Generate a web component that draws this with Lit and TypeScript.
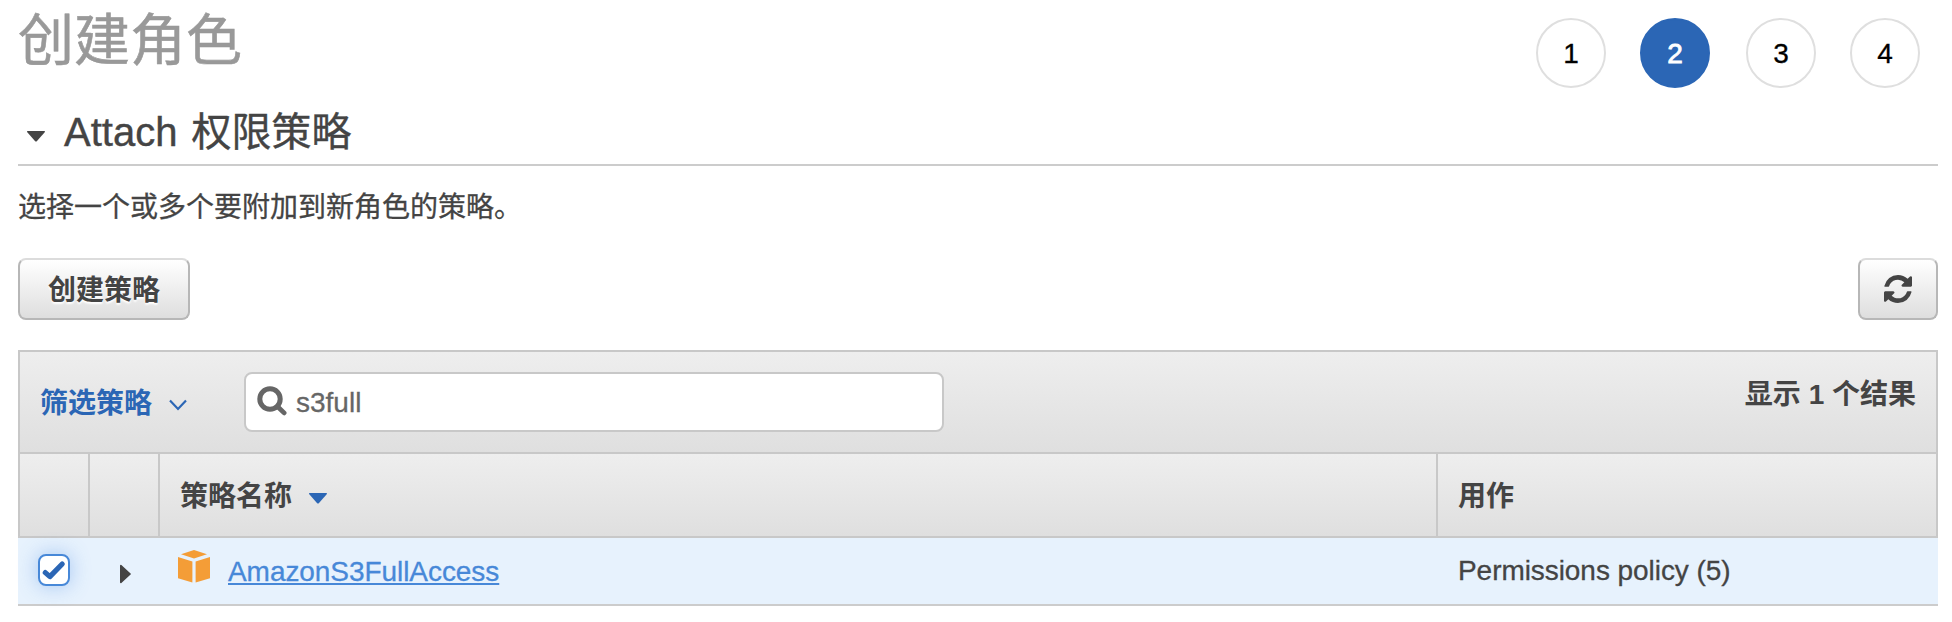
import { LitElement, html, css, svg } from "lit";
import { customElement, property, state } from "lit/decorators.js";
import { classMap } from "lit/directives/class-map.js";

interface Policy {
  name: string;
  usedAs: string;
  selected: boolean;
}

const refreshPath =
  "M1511 1056q0 5-1 7-64 268-268 434.5t-478 166.5q-146 0-282.5-55t-243.5-157l-129 129q-19 19-45 19t-45-19-19-45v-448q0-26 19-45t45-19h448q26 0 45 19t19 45-19 45l-137 137q71 66 161 102t187 36q134 0 250-65t186-179q11-17 53-117 8-23 30-23h192q13 0 22.5 9.5t9.5 22.5zm25-800v448q0 26-19 45t-45 19h-448q-26 0-45-19t-19-45 19-45l138-138q-148-137-349-137-134 0-250 65t-186 179q-11 17-53 117-8 23-30 23h-199q-13 0-22.5-9.5t-9.5-22.5v-7q65-268 270-434.5t480-166.5q146 0 284 55.5t245 156.5l130-129q19-19 45-19t45 19 19 45z";

@customElement("wizard-steps")
export class WizardSteps extends LitElement {
  @property({ type: Number }) count = 4;
  @property({ type: Number }) current = 1;

  static styles = css`
    :host {
      display: flex;
      gap: 34px;
    }
    .step {
      box-sizing: border-box;
      width: 70px;
      height: 70px;
      border: 2px solid #dfdfdf;
      border-radius: 50%;
      background: #fff;
      color: #000;
      font-size: 28px;
      line-height: 68px;
      text-align: center;
      -webkit-text-stroke: 0.3px currentColor;
    }
    .current {
      margin-right: 2px;
      border-color: #2b66b5;
      background: #2b66b5;
      color: #fff;
      -webkit-text-stroke: 0.8px #fff;
    }
  `;

  render() {
    return Array.from({ length: this.count }, (_, i) => i + 1).map(
      (n) => html`<div class=${classMap({ step: true, current: n === this.current })}>${n}</div>`
    );
  }
}

@customElement("app-root")
export class AppRoot extends LitElement {
  @state() private query = "s3full";
  @state() private policies: Policy[] = [
    { name: "AmazonS3FullAccess", usedAs: "Permissions policy (5)", selected: true },
  ];

  static styles = css`
    :host {
      display: block;
      box-sizing: border-box;
      height: 622px;
      padding: 0 14px 0 18px;
      overflow: hidden;
      background: #fff;
      color: #444;
      font-family: "Liberation Sans", "Noto Sans CJK SC", sans-serif;
      font-size: 28px;
    }
    svg {
      display: block;
      flex: none;
    }
    .top {
      display: flex;
      justify-content: space-between;
      height: 98px;
      padding-right: 18px;
    }
    .title {
      margin: 0;
      color: #999;
      font-size: 56px;
      font-weight: 400;
      line-height: 81px;
      -webkit-text-stroke: 0.6px currentColor;
    }
    .steps {
      margin-top: 18px;
    }
    .section {
      display: flex;
      box-sizing: border-box;
      height: 68px;
      margin: 0;
      padding-left: 9px;
      border-bottom: 2px solid #ccc;
      font-size: 40px;
      font-weight: 400;
      line-height: 68px;
      word-spacing: 3px;
      -webkit-text-stroke: 0.4px currentColor;
    }
    .section svg {
      margin: 33px 19px 0 0;
    }
    .hint {
      margin: 0;
      height: 92px;
      line-height: 83px;
      -webkit-text-stroke: 0.3px currentColor;
    }
    .actions {
      display: flex;
      justify-content: space-between;
      height: 62px;
      margin-bottom: 30px;
    }
    .button {
      display: flex;
      align-items: center;
      justify-content: center;
      box-sizing: border-box;
      width: 172px;
      height: 62px;
      padding: 0;
      border: 2px solid #b7b7b7;
      border-top-color: #dcdcdc;
      border-radius: 8px;
      background: linear-gradient(#fff, #dedede);
      color: #444;
      font: 700 28px/58px "Liberation Sans", "Noto Sans CJK SC", sans-serif;
      text-shadow: 0 2px 2px #fff;
    }
    .button span {
      padding-top: 3px;
    }
    .icon-button {
      width: 80px;
    }
    .filter {
      display: flex;
      box-sizing: border-box;
      height: 102px;
      padding: 20px 20px 0 20px;
      border: 2px solid #c8c8c8;
      border-bottom: 0;
      background: linear-gradient(#eee, #dfdfdf);
      font-weight: 700;
    }
    .filter-menu {
      display: flex;
      width: 204px;
      color: #2b66b5;
      line-height: 63px;
    }
    .filter-menu svg {
      margin: 27px 0 0 16px;
    }
    .search {
      display: flex;
      box-sizing: border-box;
      width: 700px;
      height: 60px;
      padding-left: 11px;
      border: 2px solid #c8c8c8;
      border-radius: 8px;
      background: #fff;
      color: #666;
      font-weight: 400;
      line-height: 57px;
      -webkit-text-stroke: 0.3px currentColor;
    }
    .search svg {
      margin: 12px 9px 0 0;
    }
    .result {
      margin-left: auto;
      line-height: 46px;
    }
    .grid {
      display: grid;
      grid-template-columns: 72px 70px 1278px 1fr;
    }
    .head {
      box-sizing: border-box;
      height: 86px;
      border: 2px solid #c8c8c8;
      grid-template-columns: 70px 70px 1278px 1fr;
      background: linear-gradient(#eee, #dfdfdf);
      font-weight: 700;
      line-height: 85px;
    }
    .th {
      display: flex;
      box-sizing: border-box;
      height: 82px;
      padding-left: 20px;
      border-right: 2px solid #c8c8c8;
    }
    .th:last-child {
      border-right: 0;
    }
    .th svg {
      margin: 39px 0 0 17px;
    }
    .row {
      box-sizing: border-box;
      height: 68px;
      border-bottom: 2px solid #ccc;
      line-height: 65px;
    }
    .selected {
      background: #e7f2fd;
    }
    .check {
      box-sizing: border-box;
      width: 32px;
      height: 32px;
      margin: 16px 0 0 20px;
      border: 2px solid #4788d8;
      border-radius: 8px;
      background: #fff;
      box-shadow: 0 0 20px rgba(71, 136, 226, 0.42);
    }
    .expand {
      margin: 26px 0 0 30px;
    }
    .name {
      display: flex;
      padding-left: 18px;
      line-height: 68px;
    }
    .name svg {
      margin: 12px 18px 0 0;
    }
    .link {
      height: 66px;
      color: #4788d8;
      letter-spacing: -0.06px;
      text-decoration: underline;
      text-decoration-thickness: 2px;
      text-underline-offset: 2px;
      text-decoration-skip-ink: none;
      -webkit-text-stroke: 0.3px currentColor;
    }
    .used {
      padding-left: 20px;
      letter-spacing: -0.06px;
      -webkit-text-stroke: 0.3px currentColor;
    }
  `;

  private down(color: string) {
    return html`<svg width="18" height="11" viewBox="0 0 18 11">
      ${svg`<path fill=${color} d="M0.5 0h17q.8.6.2 1.3L9.8 10.2q-.8.8-1.6 0L.3 1.3Q-.3.6.5 0z"/>`}
    </svg>`;
  }

  private row(p: Policy) {
    return html`<div class=${classMap({ grid: true, row: true, selected: p.selected })}>
      <div>
        <div class="check">
          <svg width="28" height="28" viewBox="2 2 28 28" fill="none" stroke="#2b66b5"
            stroke-width="5.2" stroke-linecap="round" stroke-linejoin="round">
            <path d="M7.3 18.6l4.6 4L24.2 10" />
          </svg>
        </div>
      </div>
      <div>
        <svg class="expand" width="11" height="20" viewBox="0 0 11 20">
          <path fill="#444" d="M0 1.4Q.5.4 1.4 1L10.6 9.4q.7.6 0 1.2L1.4 19Q.5 19.6 0 18.6z" />
        </svg>
      </div>
      <div class="name">
        <svg width="32" height="33" viewBox="0 0 32 33" fill="#f49d37">
          <path d="M3 4.2L16 0l13 4.2-13 4.2z" />
          <path d="M0 7l14.4 4.6v20.9L0 28.2z" />
          <path d="M32 7l-14.4 4.6v20.9L32 28.2z" />
        </svg>
        <span class="link">${p.name}</span>
      </div>
      <div class="used">${p.usedAs}</div>
    </div>`;
  }

  render() {
    return html`
      <header class="top">
        <h1 class="title">创建角色</h1>
        <wizard-steps class="steps" .count=${4} .current=${2}></wizard-steps>
      </header>
      <h2 class="section">${this.down("#444")}<span>Attach 权限策略</span></h2>
      <p class="hint">选择一个或多个要附加到新角色的策略。</p>
      <div class="actions">
        <button class="button"><span>创建策略</span></button>
        <button class="button icon-button" aria-label="刷新">
          <svg width="28" height="28" viewBox="0 128 1536 1536" fill="#444">
            <path d=${refreshPath} />
          </svg>
        </button>
      </div>
      <div class="filter">
        <div class="filter-menu">
          <span>筛选策略</span>
          <svg width="20" height="13" viewBox="0 0 20 13" fill="none" stroke="#2b66b5" stroke-width="2.2">
            <path d="M2 1.6l8 8.4 8-8.4" />
          </svg>
        </div>
        <div class="search">
          <svg width="30" height="30" viewBox="0 0 30 30" fill="none" stroke="#666">
            <circle cx="13" cy="13" r="10.2" stroke-width="5" />
            <path d="M20.5 20.5l6.6 6.4" stroke-width="4.8" stroke-linecap="round" />
          </svg>
          <span>${this.query}</span>
        </div>
        <span class="result">显示 ${this.policies.length} 个结果</span>
      </div>
      <div class="grid head">
        <div class="th"></div>
        <div class="th"></div>
        <div class="th"><span>策略名称</span>${this.down("#2b66b5")}</div>
        <div class="th">用作</div>
      </div>
      ${this.policies.map((p) => this.row(p))}
    `;
  }
}
